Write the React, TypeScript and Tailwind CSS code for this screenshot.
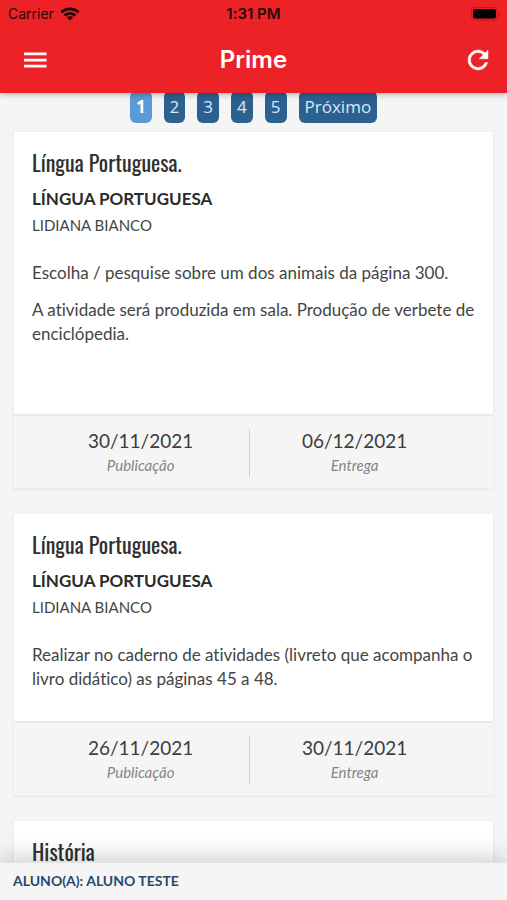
import React from "react";

type Activity = {
  title: string;
  details?: {
    subject: string;
    teacher: string;
    body: string[];
    published: string;
    due: string;
  };
  roomy?: boolean;
};

const activities: Activity[] = [
  {
    title: "Língua Portuguesa.",
    details: {
      subject: "LÍNGUA PORTUGUESA",
      teacher: "LIDIANA BIANCO",
      body: [
        "Escolha / pesquise sobre um dos animais da página 300.",
        "A atividade será produzida em sala. Produção de verbete de enciclópedia.",
      ],
      published: "30/11/2021",
      due: "06/12/2021",
    },
    roomy: true,
  },
  {
    title: "Língua Portuguesa.",
    details: {
      subject: "LÍNGUA PORTUGUESA",
      teacher: "LIDIANA BIANCO",
      body: [
        "Realizar no caderno de atividades (livreto que acompanha o livro didático) as páginas 45 a 48.",
      ],
      published: "26/11/2021",
      due: "30/11/2021",
    },
  },
  { title: "História" },
];

function StatusBar() {
  return (
    <div className="grid h-7 grid-cols-3 items-center px-2 text-sm text-[#2a0607]">
      <div className="flex items-center gap-1.5">
        <span>Carrier</span>
        <svg className="h-3.5 w-5" viewBox="0 0 20 14" fill="none" stroke="#1c0405" strokeWidth="2.8" aria-hidden="true">
          <path d="M1.4 5.3a12.4 12.4 0 0 1 17.2 0" />
          <path d="M4.6 8.500a7.9 7.9 0 0 1 10.8 0" />
          <path d="M10 13.600 6.800 10.500a4.500 4.500 0 0 1 6.400 0z" fill="#1c0405" stroke="none" />
        </svg>
      </div>
      <span className="text-center text-[15px] font-semibold">1:31 PM</span>
      <svg className="-mr-0.5 h-3.5 w-[30px] justify-self-end" viewBox="0 0 30 14" aria-hidden="true">
        <rect x="0.5" y="0.5" width="26" height="12.5" rx="3.5" fill="none" stroke="#b81c20" />
        <rect x="2" y="2" width="23" height="9.500" rx="2" fill="#000" />
        <path d="M28 4.700c1.2.4 1.2 3.6 0 4z" fill="#a3181c" />
      </svg>
    </div>
  );
}

function Header() {
  return (
    <header className="relative z-10 shrink-0 bg-[#ec2227] font-['Inter',sans-serif] shadow-[0_1px_6px_rgba(0,0,0,0.35)]">
      <StatusBar />
      <div className="flex h-[65px] items-center pr-3.5 pb-0.5 pl-5">
        <button type="button" aria-label="Menu" className="text-white">
          <svg className="size-[30px]" viewBox="0 0 30 30" fill="currentColor" aria-hidden="true">
            <path d="M4 7.500h22.500v2.700H4zM4 13.700h22.500v2.700H4zM4 19.800h22.500v2.700H4z" />
          </svg>
        </button>
        <h1 className="flex-1 pr-1.5 text-center text-2xl font-semibold text-white">Prime</h1>
        <button type="button" aria-label="Atualizar" className="text-white">
          <svg className="size-[30px]" viewBox="0 0 24 24" fill="currentColor" stroke="currentColor" strokeWidth="0.4" aria-hidden="true">
            <path d="M17.650 6.350A7.960 7.960 0 0 0 12 4a8 8 0 1 0 7.730 10h-2.080A6 6 0 1 1 12 6c1.660 0 3.140.690 4.220 1.780L13 11h7V4z" />
          </svg>
        </button>
      </div>
    </header>
  );
}

function Pagination() {
  const base = "h-8 rounded-md px-1.5 text-[17px]";
  return (
    <nav aria-label="Paginação" className="-mt-0.5 flex justify-center gap-3 font-['Open_Sans',sans-serif]">
      <button type="button" aria-current="page" className={`${base} bg-[#5b9bd5] font-bold text-white`}>1</button>
      {["2", "3", "4", "5", "Próximo"].map((label) => (
        <button type="button" key={label} className={`${base} bg-[#2c6090] text-[#dce8f3]`}>{label}</button>
      ))}
    </nav>
  );
}

function DateCell({ date, label }: { date: string; label: string }) {
  return (
    <div className="text-center">
      <p className="text-[19px] leading-6 text-[#3c3c3c]">{date}</p>
      <p className="text-[15px] leading-6 text-[#858585] italic">{label}</p>
    </div>
  );
}

function ActivityCard({ item }: { item: Activity }) {
  const { details } = item;
  return (
    <article className="border border-[#efefef] bg-white shadow-[0_1px_2px_rgba(0,0,0,0.06)]">
      <div className={`pt-3.5 pr-2 pl-[18px] ${item.roomy ? "pb-[68px]" : "pb-[30px]"}`}>
        <h2 className="font-['Oswald',sans-serif] text-[22px] leading-8 font-normal text-[#303030]">{item.title}</h2>
        {details && (
          <>
            <h3 className="mt-[5px] text-[17px] leading-8 font-bold text-[#2b2b2b]">{details.subject}</h3>
            <p className="text-[15px] leading-5 text-[#444]">{details.teacher}</p>
            <div className="mt-[26px] flex flex-col gap-[13px] text-[17px] leading-6 text-[#444]">
              {details.body.map((text) => (
                <p key={text}>{text}</p>
              ))}
            </div>
          </>
        )}
      </div>
      {details && (
        <footer className="grid grid-cols-[51fr_1px_49fr] border-t-2 border-[#e9e9e9] bg-[#f5f5f5] pt-[13px] pr-[34px] pb-[11px] pl-[18px]">
          <DateCell date={details.published} label="Publicação" />
          <div className="bg-[#cfcfcf]" />
          <DateCell date={details.due} label="Entrega" />
        </footer>
      )}
    </article>
  );
}

export default function App() {
  return (
    <div className="flex h-screen flex-col overflow-hidden bg-[#f5f5f5] font-['Lato',sans-serif] [font-variant-ligatures:none]">
      <Header />
      <main className="min-h-0 flex-1 overflow-hidden">
        <Pagination />
        <div className="flex flex-col gap-6 px-[13px] pt-2">
          {activities.map((item, index) => (
            <ActivityCard key={index} item={item} />
          ))}
        </div>
      </main>
      <footer className="relative z-10 shrink-0 border-t border-[#e2e2e2] bg-[#f5f5f5] px-[13px] pt-2 pb-[9px] text-sm leading-5 font-bold text-[#27496d] shadow-[0_-4px_24px_rgba(0,0,0,0.2)]">
        ALUNO(A): ALUNO TESTE
      </footer>
    </div>
  );
}
